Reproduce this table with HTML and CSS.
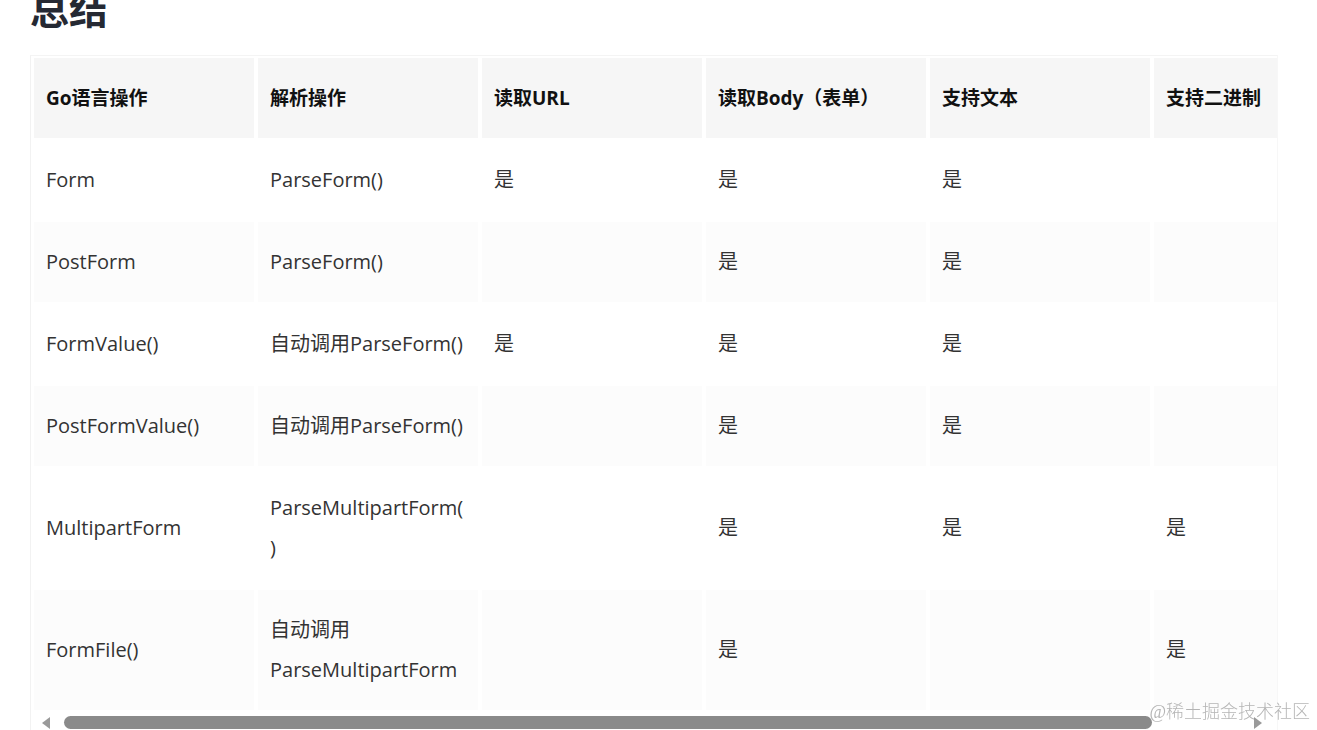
FILE: index.html
```html
<!DOCTYPE html>
<html lang="zh-CN">
<head>
<meta charset="utf-8">
<title>总结</title>
<link rel="stylesheet" href="styles.css">
</head>
<body>
<div class="page">
  <h2 class="title">总结</h2>
  <div class="table-wrap">
    <div class="table-clip">
      <table class="summary">
        <thead>
          <tr>
            <th>Go语言操作</th>
            <th>解析操作</th>
            <th>读取URL</th>
            <th>读取Body（表单）</th>
            <th>支持文本</th>
            <th>支持二进制</th>
          </tr>
        </thead>
        <tbody>
          <tr>
            <td>Form</td>
            <td>ParseForm()</td>
            <td>是</td>
            <td>是</td>
            <td>是</td>
            <td></td>
          </tr>
          <tr>
            <td>PostForm</td>
            <td>ParseForm()</td>
            <td></td>
            <td>是</td>
            <td>是</td>
            <td></td>
          </tr>
          <tr>
            <td>FormValue()</td>
            <td>自动调用ParseForm()</td>
            <td>是</td>
            <td>是</td>
            <td>是</td>
            <td></td>
          </tr>
          <tr>
            <td>PostFormValue()</td>
            <td>自动调用ParseForm()</td>
            <td></td>
            <td>是</td>
            <td>是</td>
            <td></td>
          </tr>
          <tr>
            <td>MultipartForm</td>
            <td>ParseMultipartForm()</td>
            <td></td>
            <td>是</td>
            <td>是</td>
            <td>是</td>
          </tr>
          <tr>
            <td>FormFile()</td>
            <td>自动调用ParseMultipartForm</td>
            <td></td>
            <td>是</td>
            <td></td>
            <td>是</td>
          </tr>
        </tbody>
      </table>
    </div>
    <div class="hscroll">
      <svg class="arrow" width="10" height="12" viewBox="0 0 10 12"><polygon points="9,0 9,12 1,6" fill="#9a9a9a"/></svg>
      <div class="track"><div class="thumb"></div></div>
      <svg class="arrow" width="10" height="12" viewBox="0 0 10 12"><polygon points="1,0 1,12 9,6" fill="#9a9a9a"/></svg>
    </div>
  </div>
</div>
<div class="watermark">@稀土掘金技术社区</div>
</body>
</html>
```

FILE: styles.css
```css
html, body {
  margin: 0;
  padding: 0;
  background: #ffffff;
  overflow: hidden;
}

body {
  font-family: "Open Sans", "Noto Sans CJK SC", sans-serif;
  color: #333333;
  width: 1317px;
  height: 730px;
}

.page {
  padding: 0 30px;
}

.title {
  margin: -20px 0 0 0;
  font-family: "Noto Sans CJK SC", sans-serif;
  font-size: 39px;
  line-height: 54px;
  font-weight: 700;
  color: #252933;
  height: 54px;
}

.table-wrap {
  margin-top: 21px;
  width: 1246px;
  border-top: 1px solid #f4f4f4;
  border-left: 1px solid #f2f2f2;
  border-right: 1px solid #f7f7f7;
}

.table-clip {
  overflow: hidden;
}

.summary {
  border-collapse: separate;
  border-spacing: 4px 2px;
  margin-left: -1px;
}

.summary th,
.summary td {
  width: 196px;
  min-width: 196px;
  max-width: 196px;
  padding: 20px 12px;
  line-height: 40px;
  text-align: left;
  vertical-align: middle;
  overflow-wrap: break-word;
}

.summary th {
  background: #f6f6f6;
  font-weight: 700;
  color: #111111;
  font-family: "Open Sans", "Noto Sans CJK SC", sans-serif;
  font-size: 19px;
}

.summary td {
  font-family: "Open Sans", "Noto Sans CJK SC", sans-serif;
  font-size: 20px;
  color: #333333;
}

.summary tbody tr:nth-child(even) td {
  background: #fcfcfc;
}

.hscroll {
  display: flex;
  align-items: flex-start;
  gap: 13px;
  height: 18px;
  padding: 4px 14px 0 10px;
  box-sizing: border-box;
}

.arrow {
  flex: none;
  margin-top: 1px;
}

.track {
  flex: 1;
  height: 13px;
  display: flex;
}

.thumb {
  width: 1088px;
  height: 13px;
  border-radius: 7px;
  background: #8a8a8a;
}

.watermark {
  position: fixed;
  right: 7px;
  bottom: 7px;
  font-family: "Liberation Serif", "Noto Sans CJK SC", serif;
  font-size: 18px;
  font-weight: 300;
  color: rgba(150, 150, 150, 0.7);
}
```
